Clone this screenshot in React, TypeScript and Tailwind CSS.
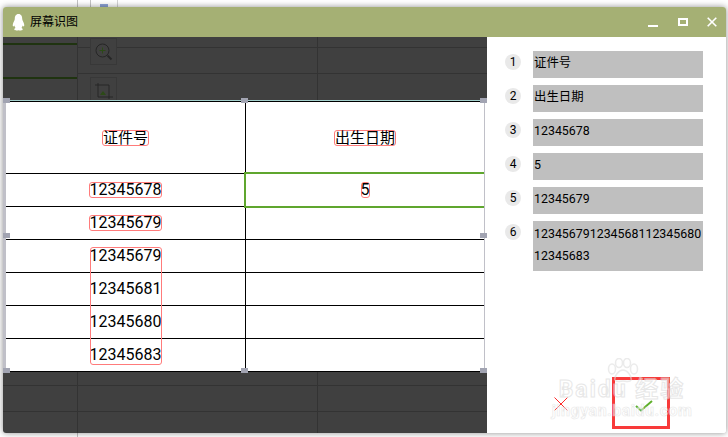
import React from 'react';

const font = { fontFamily: 'Roboto, "Noto Sans CJK SC", sans-serif' };

const items = [
  { n: 1, text: '证件号', tall: false },
  { n: 2, text: '出生日期', tall: false },
  { n: 3, text: '12345678', tall: false },
  { n: 4, text: '5', tall: false },
  { n: 5, text: '12345679', tall: false },
  { n: 6, text: '123456791234568112345680\n12345683', tall: true },
];

const rows = [
  { left: '12345678', boxed: true },
  { left: '12345679', boxed: true },
  { left: '12345679', boxed: false },
  { left: '12345681', boxed: false },
  { left: '12345680', boxed: false },
  { left: '12345683', boxed: false },
];

// 选区上的灰色小方块，九宫格排布，中间一格留空
const handles = [
  'self-start justify-self-start',
  'self-start justify-self-center',
  'self-start justify-self-end',
  'self-center justify-self-start',
  'invisible',
  'self-center justify-self-end',
  'self-end justify-self-start',
  'self-end justify-self-center',
  'self-end justify-self-end',
];

const Box = ({ children }: { children: React.ReactNode }) => (
  <span className="inline-block rounded-[3px] border border-[#ff7b7b] leading-[14px]">{children}</span>
);

export default function App() {
  return (
    <div
      className="relative h-[437px] w-[728px] overflow-hidden bg-white pl-[3px] pt-[7px] text-black [background:linear-gradient(#c4c4c4,#c4c4c4)_77px_0/1px_100%_no-repeat,linear-gradient(#d4d4d4,#d4d4d4)_117px_0/1px_7px_no-repeat,linear-gradient(#c4c4c4,#c4c4c4)_90px_0/1px_7px_no-repeat,linear-gradient(#8fa5d8,#8fa5d8)_100px_4px/8px_3px_no-repeat,#fff]"
      style={font}
    >
      {/* 窗口 */}
      <div className="flex h-[426px] w-[723px] flex-col overflow-hidden rounded-[3px] shadow-[0_0_6px_rgba(0,0,0,0.45)]">
        <div className="flex h-[30px] shrink-0 items-center bg-[#a5b074] pl-[9px]">
          <svg width="13" height="17" viewBox="0 0 14 17" preserveAspectRatio="none" className="shrink-0">
            <path
              d="M7 0C4 0 3 2.400 3 5C3 6.300 1.500 8 1 10C.6 11.600 .9 12.500 1.500 12.400C1.900 12.300 2.200 12 2.500 11.600C2.800 12.600 3.200 13.300 3.800 13.900C2.800 14.300 2.300 14.900 2.500 15.600C2.800 16.600 5 16.600 7 16.200C9 16.600 11.200 16.600 11.500 15.600C11.700 14.900 11.200 14.300 10.200 13.900C10.800 13.300 11.200 12.600 11.500 11.600C11.800 12 12.100 12.300 12.500 12.400C13.100 12.500 13.400 11.600 13 10C12.500 8 11 6.300 11 5C11 2.400 10 0 7 0Z"
              fill="#fff"
            />
          </svg>
          <span className="ml-[5px] text-[12px] leading-none">屏幕识图</span>
          <div className="ml-auto flex items-center">
            <div className="mt-[8px] h-[2px] w-[10px] bg-white" />
            <div className="ml-[20px] h-[8px] w-[10px] border-2 border-white" />
            <svg width="10" height="10" viewBox="0 0 10 10" className="ml-[19px] mr-[9px]">
              <path d="M.7 .7L9.300 9.300M9.300 .7L.7 9.300" stroke="#fff" strokeWidth="1.600" />
            </svg>
          </div>
        </div>

        <div className="flex min-h-0 flex-1">
          {/* 左侧截图区 */}
          <div className="flex w-[484px] shrink-0 flex-col bg-[#404040]">
            {/* 选区上方：透出的工具栏和表格线 */}
            <div className="flex h-[63px] shrink-0 overflow-hidden [background:linear-gradient(#333,#333)_74px_0/1px_100%_no-repeat,linear-gradient(#333,#333)_314px_0/1px_100%_no-repeat,linear-gradient(#333,#333)_74px_10px/410px_1px_no-repeat,linear-gradient(#333,#333)_74px_36px/410px_1px_no-repeat]">
              <div className="w-[74px] shrink-0 pt-[6px]">
                <div className="h-[2px] bg-[#1f3310]" />
                <div className="mt-[32px] h-[2px] bg-[#1f3310]" />
              </div>
              <div className="flex flex-col gap-[12px] pl-[13px] pt-px">
                <div className="flex h-[27px] w-[27px] shrink-0 items-center justify-center border border-[#383838] bg-[#404040]">
                  <svg width="18" height="18" viewBox="0 0 18 18" fill="none">
                    <circle cx="7.500" cy="7.500" r="6.500" stroke="#262626" />
                    <path d="M7.500 4.500V10.500M4.500 7.500H10.500" stroke="#2c4a17" />
                    <path d="M12.500 12.500L16.500 16.500" stroke="#262626" strokeWidth="2" />
                  </svg>
                </div>
                <div className="flex h-[27px] w-[27px] shrink-0 justify-center border border-[#383838] bg-[#404040] pt-[5px]">
                  <svg width="18" height="18" viewBox="0 0 18 18" fill="none">
                    <path d="M0 2H14V16M3 0V14H18" stroke="#262626" />
                    <path d="M5 12L8 8L11 12Z" fill="#2c4a17" />
                  </svg>
                </div>
              </div>
            </div>

            {/* 表格 */}
            <div className="relative h-[272px] w-[484px] shrink-0 border-l-[3px] border-l-[#c0c0c8] bg-white pr-[2px]">
              <div className="h-full border-r border-r-[#c0c0c8]">
                <div className="h-px bg-[#a3d0cc]" />
                <div className="flex h-[73px] border-y border-black text-[15px]">
                  <div className="flex w-[240px] items-center justify-center border-r border-black">
                    <Box>证件号</Box>
                  </div>
                  <div className="flex flex-1 items-center justify-center">
                    <Box>出生日期</Box>
                  </div>
                </div>
                {rows.map((row, i) => (
                  <div key={i} className="flex h-[33px] border-b border-black text-[16px]">
                    <div className="flex w-[240px] items-center justify-center border-r border-black">
                      {row.boxed ? <Box>{row.left}</Box> : <span className="leading-[14px]">{row.left}</span>}
                    </div>
                    <div className="flex-1" />
                  </div>
                ))}
              </div>
              {/* 绿色选中单元格 */}
              <div className="absolute left-[238px] top-[72px] flex h-[36px] w-[240px] items-center justify-center border-2 border-r-0 border-[#5fa62e] text-[16px]">
                <span className="flex w-[9px] justify-center rounded-[3px] border border-[#ff7b7b] leading-[14px]">5</span>
              </div>
              {/* 多行识别框 */}
              <div className="absolute left-[84px] top-[147px] h-[118px] w-[72px] rounded-[3px] border border-[#ff7b7b]" />
              {/* 选区手柄 */}
              <div className="absolute bottom-[-1px] left-[-3px] right-0 top-[-2px] grid grid-cols-3 grid-rows-3">
                {handles.map((h, i) => (
                  <div key={i} className={`h-[5px] w-[7px] bg-[#a2a4b2] ${h}`} />
                ))}
              </div>
            </div>

            {/* 选区下方 */}
            <div className="min-h-0 flex-1 [background:linear-gradient(#333,#333)_74px_0/1px_100%_no-repeat,linear-gradient(#333,#333)_314px_0/1px_100%_no-repeat,linear-gradient(#333,#333)_0_13px/100%_1px_no-repeat,linear-gradient(#333,#333)_0_39px/100%_1px_no-repeat]" />
          </div>

          {/* 右侧识别结果 */}
          <div className="relative flex flex-1 flex-col bg-white pl-[18px] pt-[14px]">
            <div className="flex flex-col gap-[7px]">
              {items.map((item) => (
                <div key={item.n} className="flex items-start gap-[12px]">
                  <div className="mt-[3px] flex h-[16px] w-[16px] shrink-0 items-center justify-center rounded-full bg-[#e9e9e9] text-[12px] leading-none">
                    {item.n}
                  </div>
                  <div
                    className={
                      item.tall
                        ? 'h-[50px] w-[170px] whitespace-pre-line bg-[#bfbfbf] pl-px pt-[2px] text-[12.4px] leading-[22px]'
                        : 'flex h-[27px] w-[170px] items-center bg-[#bfbfbf] pb-[4px] pl-px text-[12.4px] leading-[22px]'
                    }
                  >
                    {item.text}
                  </div>
                </div>
              ))}
            </div>

            {/* 底部按钮 */}
            <div className="mb-[4px] ml-[49px] mt-auto flex items-center gap-[44px]">
              <svg width="14" height="14" viewBox="0 0 14 14" className="mt-[1px]">
                <path d="M.5 .5L13.500 13.500M13.500 .5L.5 13.500" stroke="#ff2a2a" strokeWidth="1" fill="none" />
              </svg>
              <div className="flex h-[52px] w-[58px] items-center justify-center border-[3px] border-[#f83a3a] pl-[6px] pt-[6px]">
                <svg width="18" height="12" viewBox="0 0 18 12">
                  <path d="M1 6L6 10.500L17 1" stroke="#5fb02c" strokeWidth="2" fill="none" />
                </svg>
              </div>
            </div>

            {/* 百度经验水印 */}
            <div className="absolute left-[70px] top-[321px] flex w-[130px] flex-col items-center opacity-60">
              <svg width="35" height="25" viewBox="0 0 35 25" fill="none" stroke="#dedede" strokeWidth="1.500" className="mb-[-2px]">
                <ellipse cx="7" cy="11" rx="3.500" ry="5" />
                <ellipse cx="14" cy="5" rx="3.500" ry="4.500" />
                <ellipse cx="22" cy="5" rx="3.500" ry="4.500" />
                <ellipse cx="29" cy="11" rx="3.500" ry="5" />
                <path d="M18 12C14 12 9 18 10 22C11 25 16 23 18 23C20 23 25 25 26 22C27 18 22 12 18 12Z" />
              </svg>
              <span className="whitespace-nowrap text-[23px] font-bold leading-[18px] tracking-[2px] text-white [-webkit-text-stroke:1px_#d8d8d8]">
                Baidu 经验
              </span>
              <span className="mt-[4px] whitespace-nowrap text-[16px] font-bold leading-[16px] tracking-[0.5px] text-white [-webkit-text-stroke:0.6px_#d8d8d8]">
                jingyan.baidu.com
              </span>
            </div>
          </div>
        </div>
      </div>
    </div>
  );
}
